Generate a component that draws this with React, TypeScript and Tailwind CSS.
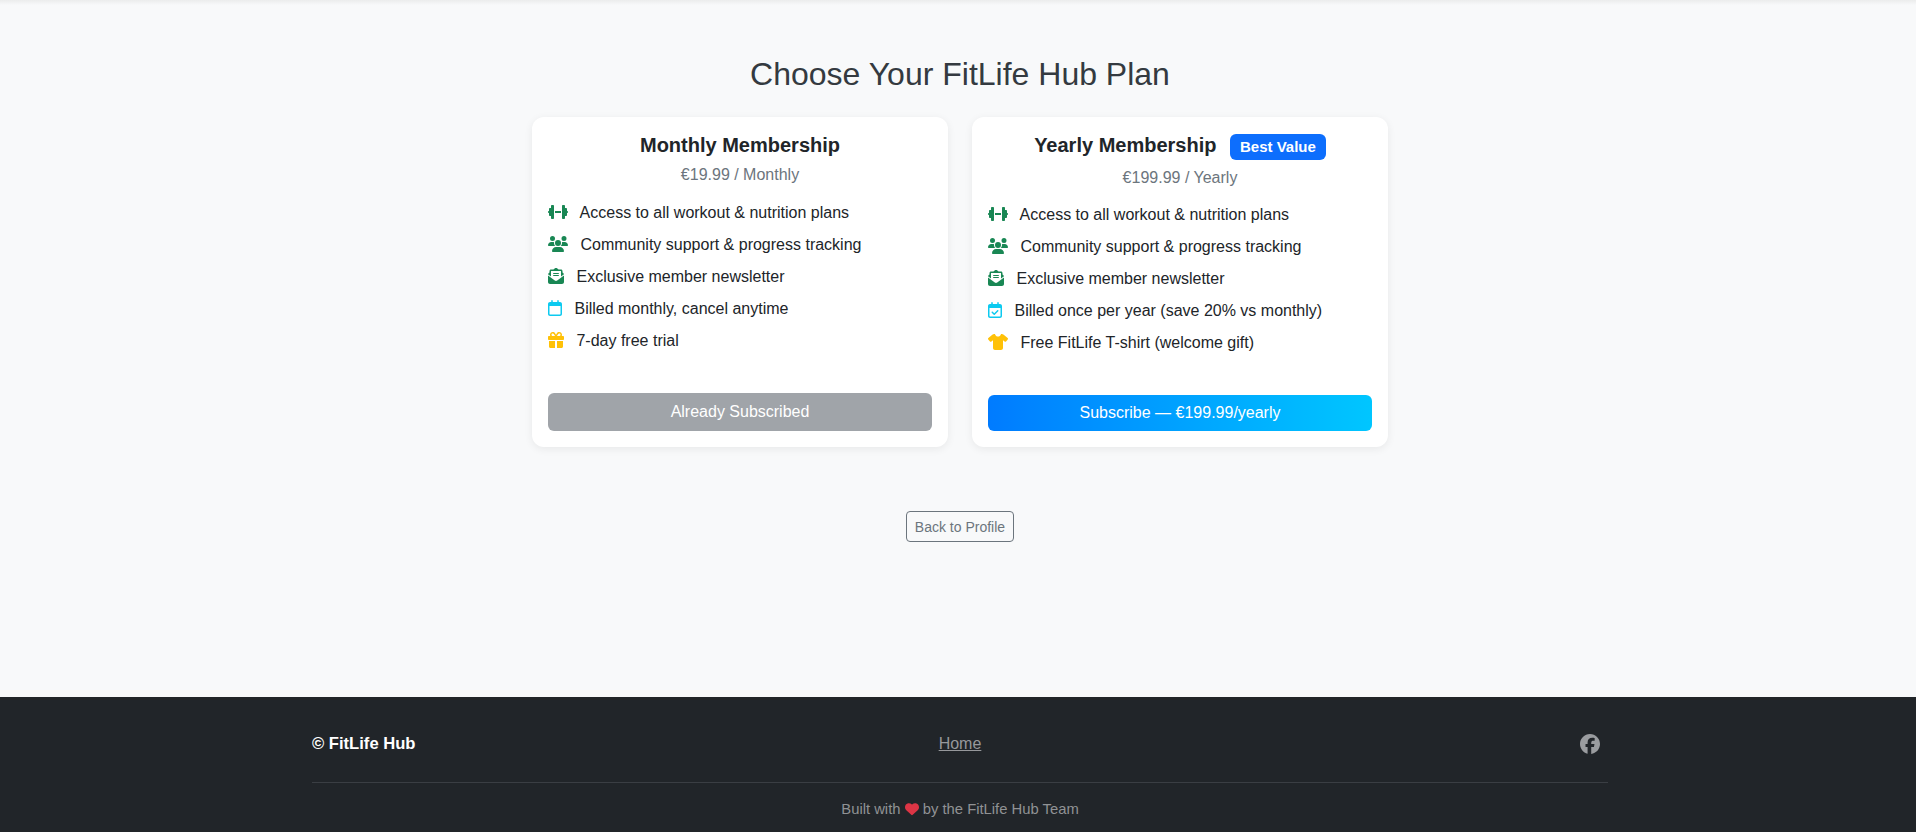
import { FaDumbbell, FaUsers, FaEnvelopeOpenText, FaRegCalendar, FaRegCalendarCheck, FaGift, FaShirt, FaFacebook, FaHeart } from "react-icons/fa6";
import type { IconType } from "react-icons";

interface Feature {
  icon: IconType;
  iconClass: string;
  text: string;
}

const COMMON: Feature[] = [
  { icon: FaDumbbell, iconClass: "w-5 text-[#198754]", text: "Access to all workout & nutrition plans" },
  { icon: FaUsers, iconClass: "w-5 text-[#198754]", text: "Community support & progress tracking" },
  { icon: FaEnvelopeOpenText, iconClass: "w-4 text-[#198754]", text: "Exclusive member newsletter" },
];

const MONTHLY: Feature[] = [
  ...COMMON,
  { icon: FaRegCalendar, iconClass: "w-3.5 text-[#0dcaf0]", text: "Billed monthly, cancel anytime" },
  { icon: FaGift, iconClass: "w-4 text-[#ffc107]", text: "7-day free trial" },
];

const YEARLY: Feature[] = [
  ...COMMON,
  { icon: FaRegCalendarCheck, iconClass: "w-3.5 text-[#0dcaf0]", text: "Billed once per year (save 20% vs monthly)" },
  { icon: FaShirt, iconClass: "w-5 text-[#ffc107]", text: "Free FitLife T-shirt (welcome gift)" },
];

function FeatureList({ items }: { items: Feature[] }) {
  return (
    <ul className="flex flex-col gap-2 text-[#212529]">
      {items.map((item) => (
        <li key={item.text} className="h-6 leading-6 whitespace-pre">
          <item.icon className={`inline-block h-4 mr-2 align-[-2px] ${item.iconClass}`} /> {item.text}
        </li>
      ))}
    </ul>
  );
}

export default function App() {
  return (
    <div className="min-h-screen flex flex-col bg-[#f8f9fa] font-['Liberation_Sans',Arial,sans-serif] text-base">
      {/* shadow of the navbar that sits just above the visible area */}
      <div className="h-[5px] shrink-0 bg-gradient-to-b from-[#ebecec] to-[#f8f9fa]" />

      <main className="h-[692px] flex flex-col items-center pt-[50px] pl-1">
        <h2 className="text-[32px] leading-[38px] text-[#343a40] mb-6">Choose Your FitLife Hub Plan</h2>

        <div className="flex gap-6">
          <div className="w-[416px] h-[330px] bg-white rounded-xl shadow-[0_2px_8px_rgba(0,0,0,0.07)] p-4 flex flex-col">
            <h5 className="text-xl leading-6 font-bold text-[#212529] text-center mb-1.5">Monthly Membership</h5>
            <p className="text-[#6c757d] text-center leading-6 mb-3.5">€19.99 / Monthly</p>
            <FeatureList items={MONTHLY} />
            <button className="mt-auto h-[38px] rounded-md bg-[#a0a4a9] text-white">Already Subscribed</button>
          </div>

          <div className="w-[416px] h-[330px] bg-white rounded-xl shadow-[0_2px_8px_rgba(0,0,0,0.07)] p-4 flex flex-col">
            <h5 className="text-xl leading-6 font-bold text-[#212529] text-center mb-1.5 whitespace-pre">
              Yearly Membership <span className="inline-block ml-2 h-[26px] leading-[25px] px-2.5 rounded-md bg-[#0d6efd] text-white text-[15px] align-[0px]">Best Value</span>
            </h5>
            <p className="text-[#6c757d] text-center leading-6 mb-[13px]">€199.99 / Yearly</p>
            <FeatureList items={YEARLY} />
            <button className="mt-auto h-9 rounded-md bg-gradient-to-r from-[#007bff] to-[#00c6ff] text-white">Subscribe — €199.99/yearly</button>
          </div>
        </div>

        <a className="mt-16 h-[31px] w-[108px] flex items-center justify-center border border-[#6c757d] rounded text-sm text-[#6c757d]">Back to Profile</a>
      </main>

      <footer className="h-[135px] bg-[#212529] flex flex-col items-center pl-1">
        <div className="w-[1296px] h-[86px] grid grid-cols-3 items-center border-b border-[#3a3e43] pt-[9px]">
          <div className="font-bold text-[16.6px] text-white">© FitLife Hub</div>
          <a className="text-center underline text-[#96989b]">Home</a>
          <div className="flex justify-end pr-2">
            <FaFacebook className="size-5 text-[#9a9c9f]" />
          </div>
        </div>
        <p className="mt-4 text-[14.8px] leading-5 text-[#909294] whitespace-pre">
          Built with <FaHeart className="inline-block size-3.5 text-[#dc3545] align-[-2px]" /> by the FitLife Hub Team
        </p>
      </footer>
    </div>
  );
}
